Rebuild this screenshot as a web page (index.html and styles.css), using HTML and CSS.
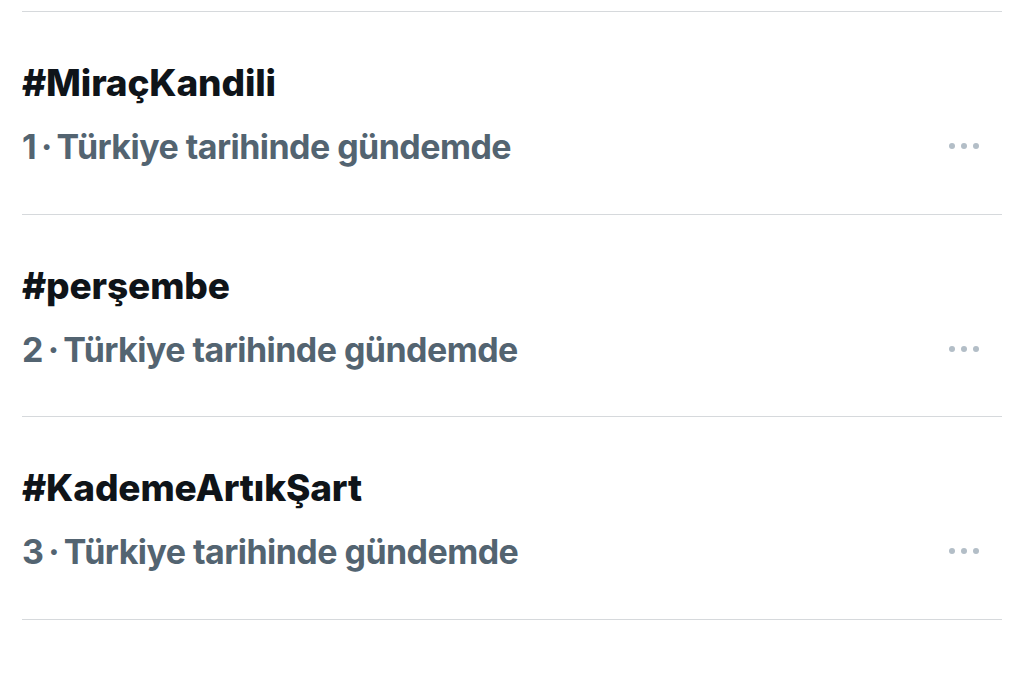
FILE: index.html
```html
<!DOCTYPE html>
<html lang="tr">
<head>
<meta charset="utf-8">
<link rel="stylesheet" href="styles.css">
</head>
<body>
<div class="list">
  <div class="row">
    <div class="texts">
      <div class="title">#MiraçKandili</div>
      <div class="meta">1&thinsp;·&thinsp;Türkiye tarihinde gündemde</div>
    </div>
    <div class="more"><span></span><span></span><span></span></div>
  </div>
  <div class="row">
    <div class="texts">
      <div class="title">#perşembe</div>
      <div class="meta">2&thinsp;·&thinsp;Türkiye tarihinde gündemde</div>
    </div>
    <div class="more"><span></span><span></span><span></span></div>
  </div>
  <div class="row">
    <div class="texts">
      <div class="title">#KademeArtıkŞart</div>
      <div class="meta">3&thinsp;·&thinsp;Türkiye tarihinde gündemde</div>
    </div>
    <div class="more"><span></span><span></span><span></span></div>
  </div>
</div>
</body>
</html>
```

FILE: styles.css
```css
html, body {
  margin: 0;
  background: #ffffff;
}
body {
  font-family: Inter, "Noto Sans", sans-serif;
  -webkit-font-smoothing: antialiased;
}
.list {
  padding: 11px 22px 0 22px;
}
.row {
  box-sizing: border-box;
  display: flex;
  align-items: flex-start;
  justify-content: space-between;
  height: 202.5px;
  padding-top: 51px;
  border-top: 1.5px solid #d6d9dc;
}
.row:last-child {
  height: 204px;
  border-bottom: 1.5px solid #d6d9dc;
}
.texts {
  display: flex;
  flex-direction: column;
  gap: 24px;
}
.title {
  font-size: 37px;
  font-weight: 800;
  color: #0f1419;
  line-height: 40px;
  letter-spacing: -0.15px;
}
.meta {
  font-size: 34px;
  font-weight: 700;
  color: #536471;
  line-height: 40px;
  letter-spacing: -0.55px;
}
.more {
  display: flex;
  gap: 6px;
  margin-right: 23px;
  margin-top: 80px;
}
.more span {
  width: 6px;
  height: 6px;
  border-radius: 50%;
  background: #b3bec7;
}
```
